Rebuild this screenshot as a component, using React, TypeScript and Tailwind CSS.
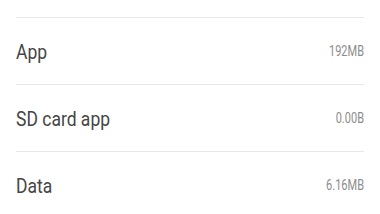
const rows = [
  { label: 'App', value: '192MB' },
  { label: 'SD card app', value: '0.00B' },
  { label: 'Data', value: '6.16MB' },
];

export default function App() {
  return (
    <div
      className="w-[380px] h-[214px] overflow-hidden bg-white"
      style={{ fontFamily: 'Roboto, "Noto Sans", sans-serif' }}
    >
      <div className="h-[17px]" />
      <div className="px-4">
        {rows.map((row) => (
          <div
            key={row.label}
            className="h-[67px] border-t border-[#e8e8e8] flex items-center justify-between pt-[3px]"
          >
            <span className="inline-block origin-center scale-y-[1.17] text-[17.5px] text-[#454545]">
              {row.label}
            </span>
            <span className="inline-block origin-center scale-y-[1.28] text-[11px] text-[#8c8c8c]">
              {row.value}
            </span>
          </div>
        ))}
      </div>
    </div>
  );
}
